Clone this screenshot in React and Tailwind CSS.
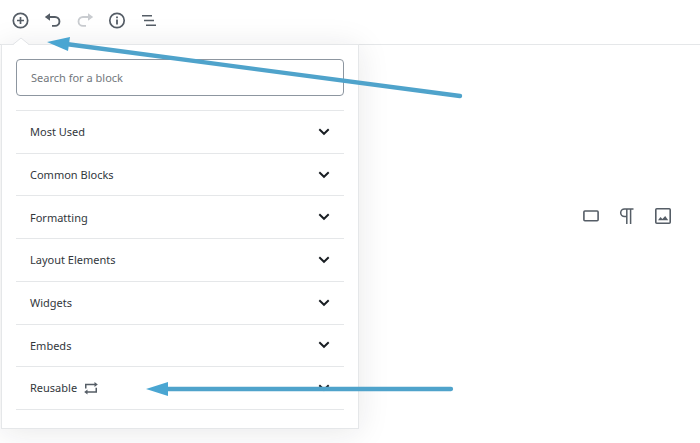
import { useState } from "react";

const categories = [
  { name: "Most Used" },
  { name: "Common Blocks" },
  { name: "Formatting" },
  { name: "Layout Elements" },
  { name: "Widgets" },
  { name: "Embeds" },
  { name: "Reusable", reusable: true },
];

const InsertIcon = () => (
  <svg
    viewBox="0 0 18 18"
    className="w-[18px] h-[18px]"
    fill="none"
    stroke="currentColor"
    strokeWidth="1.7"
  >
    <circle cx="8.5" cy="9.5" r="7.2" />
    <path d="M8.5 6v7M5 9.5h7" />
  </svg>
);

const UndoIcon = () => (
  <svg viewBox="0 0 18 18" className="w-[18px] h-[18px]" fill="currentColor">
    <path d="M6 5h5a5.200 5.200 0 0 1 0 10.800H8v-1.900h3a3.400 3.400 0 0 0 0-7H6V9.800L.8 5.900 6 2.300z" />
  </svg>
);

const RedoIcon = () => (
  <svg viewBox="0 0 18 18" className="w-[18px] h-[18px]" fill="currentColor">
    <path d="M12 5H7a5.200 5.200 0 0 0 0 10.800h3v-1.700H7a3.500 3.500 0 0 1 0-7.200h5v2.900l5.200-3.900L12 2.300z" />
  </svg>
);

const InfoIcon = () => (
  <svg viewBox="0 0 18 18" className="w-[18px] h-[18px]" fill="none">
    <circle cx="9" cy="9.5" r="7.2" stroke="currentColor" strokeWidth="1.7" />
    <path d="M8.100 8.500h1.800v5H8.100zM8.100 5.500h1.800v1.800H8.100z" fill="currentColor" />
  </svg>
);

const OutlineIcon = () => (
  <svg viewBox="0 0 18 18" className="w-[18px] h-[18px]" fill="currentColor">
    <path d="M2 4h10v1.500H2zM4 8.700h10v1.500H4zM6 13.400h10v1.500H6z" />
  </svg>
);

const ChevronIcon = () => (
  <svg
    viewBox="0 0 12 8"
    className="w-3 h-2"
    fill="none"
    stroke="currentColor"
    strokeWidth="1.9"
  >
    <path d="M1.300 1.200l4.700 4.600 4.700-4.600" />
  </svg>
);

const ReusableIcon = () => (
  <svg viewBox="0 0 14 14" className="w-3.5 h-3.5" fill="currentColor">
    <path d="M1 6.500V1.800h9.500V0L13.800 2.500 10.500 5V3.300h-8v3.200zM13 5.800v5H3.500v1.700L.2 10 3.500 7.500v1.800h8V5.800z" />
  </svg>
);

const ButtonIcon = () => (
  <svg viewBox="0 0 18 18" className="w-[18px] h-[18px]" fill="none">
    <rect x="1.9" y="4" width="14.2" height="9.8" rx="1" stroke="currentColor" strokeWidth="1.6" />
  </svg>
);

const ParagraphIcon = () => (
  <svg viewBox="0 0 18 18" className="w-[18px] h-[18px]" fill="none">
    <path
      d="M15.500 2H6.500a3.800 3.800 0 0 0 0 7.600h2.300M8.800 2v15M12.600 2v15"
      stroke="currentColor"
      strokeWidth="1.5"
    />
  </svg>
);

const ImageIcon = () => (
  <svg viewBox="0 0 18 18" className="w-[18px] h-[18px]">
    <rect x="1.8" y="1.8" width="14.4" height="14.4" rx="1" fill="none" stroke="currentColor" strokeWidth="1.6" />
    <path d="M4 13.300l2.500-3.300 1.900 2 2.800-3 3 4.300z" fill="currentColor" />
  </svg>
);

const tools = [
  { label: "Add block", Icon: InsertIcon },
  { label: "Undo", Icon: UndoIcon },
  { label: "Redo", Icon: RedoIcon, disabled: true },
  { label: "Content structure", Icon: InfoIcon },
  { label: "Block navigation", Icon: OutlineIcon },
];

const shortcuts = [
  { label: "Add Button", Icon: ButtonIcon },
  { label: "Add Paragraph", Icon: ParagraphIcon },
  { label: "Add Image", Icon: ImageIcon },
];

// Arrows drawn over the editor to point at the inserter and the Reusable tab
const Arrows = () => (
  <svg
    className="absolute top-0 left-0 z-20 pointer-events-none w-[480px] h-[420px]"
    viewBox="0 0 480 420"
    fill="#4aa6d2"
    stroke="#4fa3cb"
    aria-hidden="true"
  >
    <path d="M66 44L460 96" strokeWidth="4.3" strokeLinecap="round" />
    <path d="M47 42l23-5-2 14z" stroke="none" />
    <path d="M166 389H451" strokeWidth="4.3" strokeLinecap="round" />
    <path d="M146 389l22-7v14z" stroke="none" />
  </svg>
);

const InserterMenu = () => {
  const [search, setSearch] = useState("");

  return (
    <div className="absolute top-11 left-px z-10 w-[358px] bg-white border border-[#e5e7e9] px-3.5 pt-3.5 pb-[18px] shadow-[0_3px_30px_rgba(25,30,35,0.1)]">
      <svg
        viewBox="0 0 16 8"
        className="absolute -top-2 left-[11px] w-4 h-2"
        aria-hidden="true"
      >
        <path d="M0 8l8-7 8 7z" fill="#fff" />
        <path d="M0 7.500l8-6.500 8 6.500" fill="none" stroke="#e2e4e7" />
      </svg>
      <input
        type="text"
        aria-label="Search for a block"
        placeholder="Search for a block"
        value={search}
        onChange={(e) => setSearch(e.target.value)}
        className="block w-full h-[37px] px-3.5 mb-3.5 border border-[#8d96a0] rounded text-[11px] text-[#32373c] placeholder:text-[#72777c]"
      />
      <ul className="grid grid-rows-7 h-[300px] border-t border-[#e5e7e9]">
        {categories.map((category) => (
          <li key={category.name} className="border-b border-[#e5e7e9]">
            <button
              type="button"
              aria-expanded="false"
              className="flex items-center w-full h-full px-3.5 pt-px text-left"
            >
              <span>{category.name}</span>
              {category.reusable && (
                <span className="ml-[7px] text-[#555d66]">
                  <ReusableIcon />
                </span>
              )}
              <span className="ml-auto pb-px text-[#191e23]">
                <ChevronIcon />
              </span>
            </button>
          </li>
        ))}
      </ul>
    </div>
  );
};

const App = () => {
  return (
    <div className="relative min-h-screen overflow-hidden bg-white font-['Noto_Sans',sans-serif] text-[11px] text-[#32373c]">
      {/* Toolbar */}
      <header className="flex items-center h-[45px] pl-[5px] pb-1 border-b border-[#e5e7e9]">
        {tools.map(({ label, Icon, disabled }) => (
          <button
            key={label}
            type="button"
            aria-label={label}
            disabled={disabled}
            className="flex items-center justify-center w-8 h-8 text-[#555d66] disabled:text-[#c9ccd0]"
          >
            <Icon />
          </button>
        ))}
      </header>

      <InserterMenu />

      {/* Block shortcuts */}
      <main className="flex justify-end pt-[153px] pr-[19px]">
        {shortcuts.map(({ label, Icon }) => (
          <button
            key={label}
            type="button"
            aria-label={label}
            className="flex items-center justify-center w-9 h-9 text-[#555d66]"
          >
            <Icon />
          </button>
        ))}
      </main>

      <Arrows />
    </div>
  );
};

export default App;
